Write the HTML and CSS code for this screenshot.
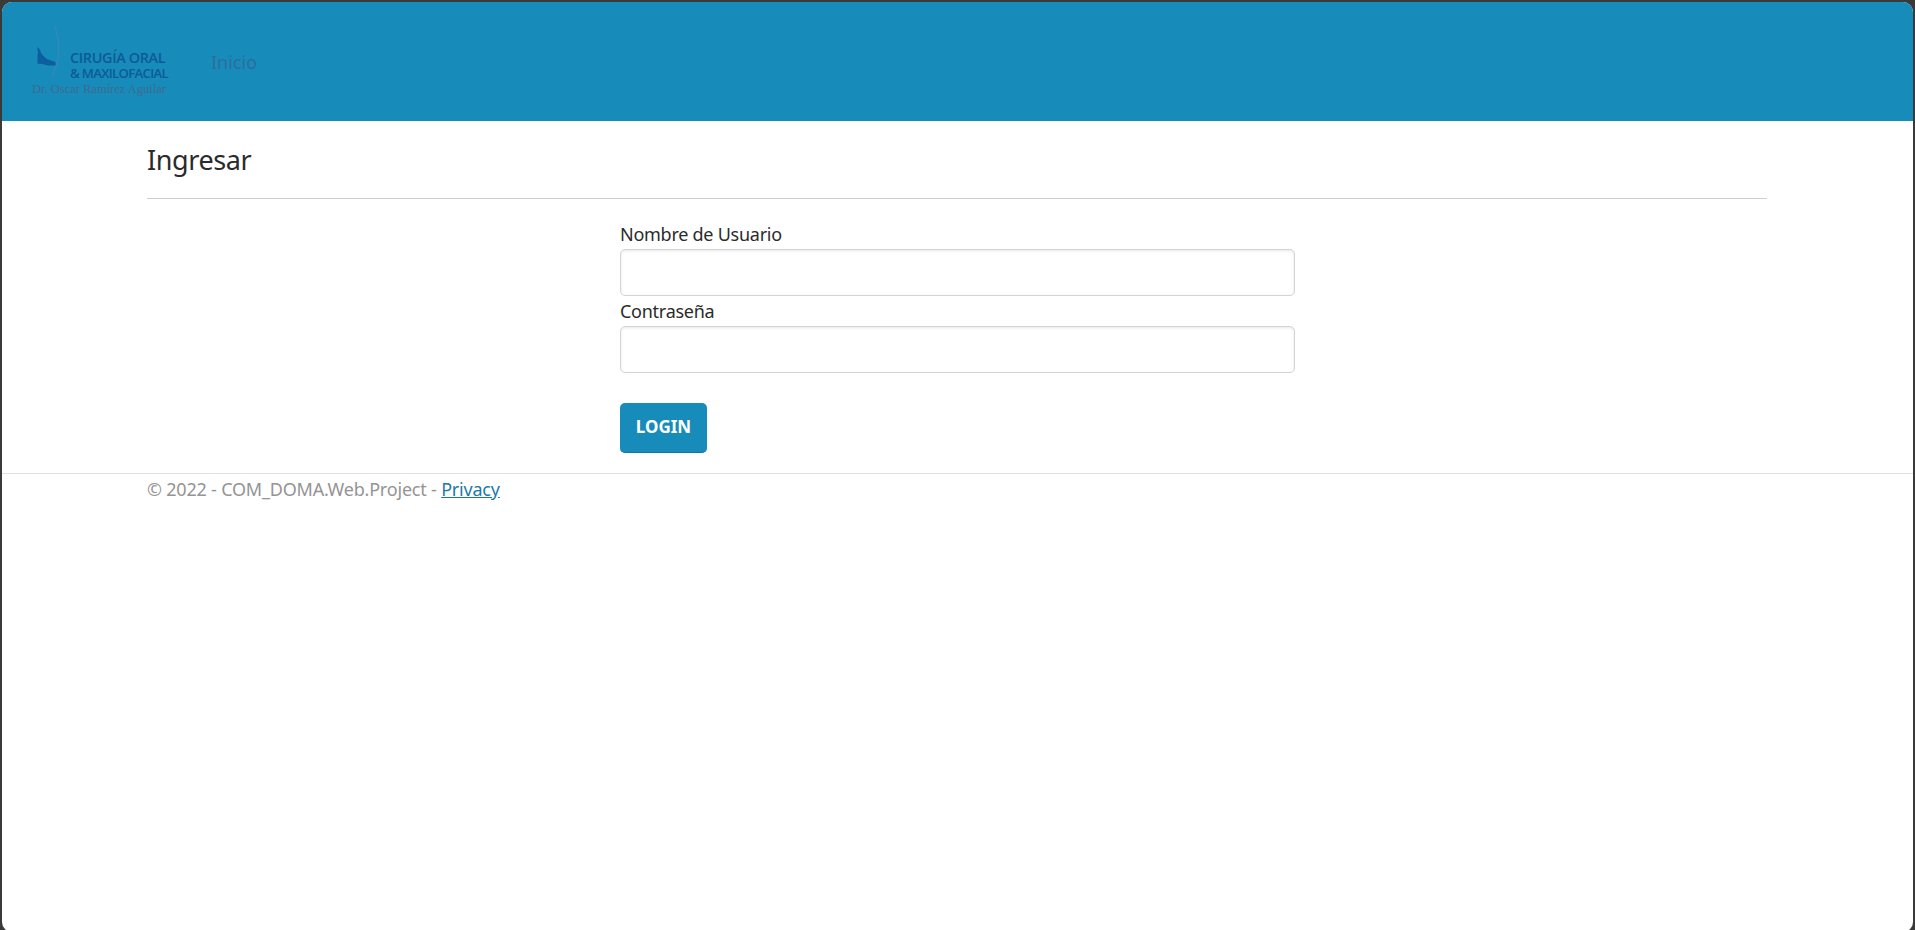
FILE: index.html
```html
<!DOCTYPE html>
<html lang="es">
<head>
<meta charset="utf-8">
<title>Ingresar</title>
<link rel="stylesheet" href="styles.css">
</head>
<body>
<div class="frame">
  <header class="topbar">
    <a class="logo" href="#">
      <svg class="logo-mark" width="36" height="62" viewBox="0 0 36 62" aria-hidden="true">
        <path class="logo-curve" d="M23 0C26 12 28 22 26 32C25 38 23 44 20 50"/>
        <path class="logo-boot" d="M5 21L8 23.500L9 27L11 29.500C13 32 16 34 19 34.500L23.500 36L23.500 39.500L16 39.500C13 38.500 9 37 5.500 38L5.500 30L6 27Z"/>
      </svg>
      <span class="logo-text">
        <span class="logo-line1">CIRUGÍA ORAL</span>
        <span class="logo-line2">&amp; MAXILOFACIAL</span>
      </span>
      <span class="logo-sign">Dr. Oscar Ramírez Aguilar</span>
    </a>
    <a class="nav-link" href="#">Inicio</a>
  </header>
  <main class="content">
    <h1 class="title">Ingresar</h1>
    <hr class="rule">
    <form class="login-form">
      <label class="field-label" for="user">Nombre de Usuario</label>
      <input class="field-input" id="user" type="text">
      <label class="field-label" for="pass">Contraseña</label>
      <input class="field-input" id="pass" type="password">
      <button class="login-btn" type="button">LOGIN</button>
    </form>
  </main>
  <footer class="footer">
    <div class="footer-inner">© 2022 - COM_DOMA.Web.Project - <a class="footer-link" href="#">Privacy</a></div>
  </footer>
</div>
</body>
</html>
```
FILE: styles.css
```css
* { box-sizing: border-box; }
html, body { height: 100%; margin: 0; }
body {
  background: #3a3a3a;
  font-family: "Noto Sans", "Open Sans", sans-serif;
  color: #212529;
  overflow: hidden;
}
.frame {
  height: 930px;
  margin: 2px 2px 0;
  background: #fff;
  border-radius: 10px;
  overflow: hidden;
}
.topbar {
  height: 119px;
  background: #178cbb;
  display: flex;
  align-items: center;
  padding-left: 30px;
}
.logo {
  position: relative;
  display: block;
  width: 136px;
  height: 76px;
  margin-top: 5px;
  text-decoration: none;
}
.logo-mark { position: absolute; left: 0; top: 0; }
.logo-curve { fill: none; stroke: #3f86b8; stroke-width: 1; }
.logo-boot { fill: #0c5e9e; }
.logo-text {
  position: absolute;
  left: 38px;
  top: 24px;
  display: flex;
  flex-direction: column;
  font-family: "Open Sans", sans-serif;
  font-weight: 600;
  color: #0e5a96;
  white-space: nowrap;
}
.logo-line1 { font-size: 14.500px; line-height: 16px; letter-spacing: -0.4px; }
.logo-line2 { font-size: 13.200px; line-height: 14px; letter-spacing: -0.7px; }
.logo-sign {
  position: absolute;
  left: 0;
  top: 56px;
  font-family: "Liberation Serif", serif;
  font-size: 12.500px;
  line-height: 15px;
  color: #3f6a8e;
  white-space: nowrap;
}
.nav-link {
  margin-left: 43px;
  font-size: 18px;
  color: #2f6d98;
  text-decoration: none;
}
.content {
  width: 1620px;
  margin-left: 145px;
}
.title {
  margin: 20px 0 0;
  font-size: 27px;
  line-height: 38px;
  letter-spacing: -0.4px;
  font-weight: 400;
  color: #2b2b2b;
}
.rule {
  margin: 19px 0 0;
  border: 0;
  border-top: 1px solid #cfcfcf;
}
.login-form {
  width: 675px;
  margin-left: 473px;
  padding-top: 23px;
  display: flex;
  flex-direction: column;
  align-items: flex-start;
}
.field-label {
  font-size: 18px;
  line-height: 25px;
  padding-bottom: 2px;
  letter-spacing: -0.26px;
  color: #2b2b2b;
}
.field-input {
  display: block;
  width: 100%;
  height: 47px;
  margin-bottom: 3px;
  border: 1px solid #d2d4d6;
  border-radius: 5px;
  background: #fff;
  box-shadow: inset 0 1px 3px rgba(0, 0, 0, 0.1);
}
.login-btn {
  margin-top: 27px;
  width: 87px;
  height: 50px;
  border: 0;
  border-bottom: 1px solid #12769f;
  border-radius: 5px;
  background: #178cbb;
  color: #fff;
  font-family: "Noto Sans", sans-serif;
  font-weight: 700;
  font-size: 17px;
  padding: 0 0 2px;
}
.footer {
  margin-top: 20px;
  border-top: 1px solid #dee2e6;
}
.footer-inner {
  margin-left: 145px;
  font-size: 18px;
  line-height: 30px;
  letter-spacing: -0.2px;
  color: #949494;
}
.footer-link { color: #1b7ba6; }
```
